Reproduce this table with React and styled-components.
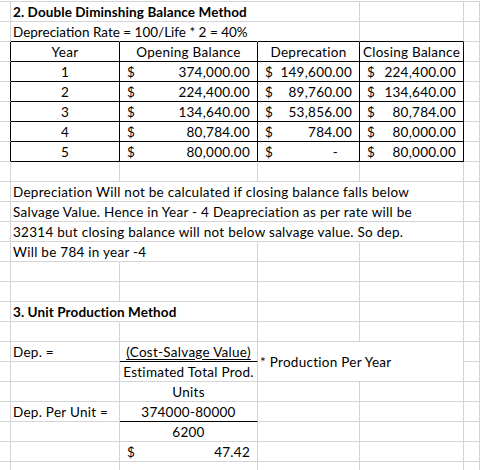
import React from 'react';
import styled, { createGlobalStyle } from 'styled-components';

const GRID = '#d4d4d4';
const INK = '#000';

const GlobalStyle = createGlobalStyle`
  html, body {
    margin: 0;
    padding: 0;
    background: #fff;
    overflow: hidden;
  }
  body {
    font-family: Lato, "Liberation Sans", sans-serif;
    color: #000;
  }
`;

const Sheet = styled.div`
  display: grid;
  grid-template-columns: 11px 109px 138px 102px 104px 1fr;
  grid-auto-rows: 20px;
  width: 480px;
  height: 469px;
  margin-top: 1px;
  border-top: 1px solid ${GRID};
  overflow: hidden;
  font-size: 13.5px;
  letter-spacing: 0.27px;
`;

const justify = {
  left: 'flex-start',
  center: 'center',
  right: 'flex-end',
  split: 'space-between',
};

const Cell = styled.div`
  box-sizing: border-box;
  min-width: 0;
  display: flex;
  align-items: center;
  justify-content: ${p => justify[p.$align || 'left']};
  padding: ${p => (p.$align === 'split' ? '0 7px' : '0 2px')};
  white-space: nowrap;
  font-weight: ${p => (p.$bold ? 700 : 400)};
  letter-spacing: ${p => (p.$bold ? '0.1px' : p.$tight ? '0' : 'inherit')};
  border-right: 1px solid ${p => (p.$noRight ? 'transparent' : p.$rb ? INK : GRID)};
  border-bottom: 1px solid ${p => (p.$bb ? INK : GRID)};
  grid-column: span ${p => p.$cols || 1};
  grid-row: span ${p => p.$rows || 1};
`;

const Underlined = styled.span`
  text-decoration: underline;
  text-underline-offset: 2px;
`;

const Dash = styled.span`
  padding-right: 14px;
`;

const Money = ({ value, ...rest }) => (
  <Cell $align="split" {...rest}>
    <span>$</span>
    {value == null ? <Dash>-</Dash> : <span>{value}</span>}
  </Cell>
);

const BlankRow = () => (
  <>
    {Array.from({ length: 6 }, (_, i) => (
      <Cell key={i} />
    ))}
  </>
);

const schedule = [
  [1, '374,000.00', '149,600.00', '224,400.00'],
  [2, '224,400.00', '89,760.00', '134,640.00'],
  [3, '134,640.00', '53,856.00', '80,784.00'],
  [4, '80,784.00', '784.00', '80,000.00'],
  [5, '80,000.00', null, '80,000.00'],
];

const note = [
  'Depreciation Will not be calculated if closing balance falls below',
  'Salvage Value. Hence in Year - 4 Deapreciation as per rate will be',
  '32314 but closing balance will not below salvage value. So dep.',
  'Will be 784 in year -4',
];

const headers = ['Year', 'Opening Balance', 'Deprecation', 'Closing Balance'];

export default function App() {
  return (
    <>
      <GlobalStyle />
      <Sheet>
        {/* row 1 */}
        <Cell />
        <Cell $bold $noRight>2. Double Diminshing Balance Method</Cell>
        <Cell $noRight />
        <Cell />
        <Cell />
        <Cell />

        {/* row 2 */}
        <Cell />
        <Cell $noRight $tight $bb>Depreciation Rate = 100/Life * 2 = 40%</Cell>
        <Cell $noRight $bb />
        <Cell $bb />
        <Cell $bb />
        <Cell />

        {/* table header */}
        <Cell $rb />
        {headers.map(h => (
          <Cell key={h} $align="center" $rb $bb>
            {h}
          </Cell>
        ))}
        <Cell />

        {schedule.map(([year, open, dep, close]) => (
          <React.Fragment key={year}>
            <Cell $rb />
            <Cell $align="center" $rb $bb>
              {year}
            </Cell>
            <Money value={open} $rb $bb />
            <Money value={dep} $rb $bb />
            <Money value={close} $rb $bb />
            <Cell />
          </React.Fragment>
        ))}

        <BlankRow />

        {note.map((line, i) => (
          <React.Fragment key={i}>
            <Cell />
            <Cell $noRight>{line}</Cell>
            <Cell $noRight={i < 3} />
            <Cell $noRight={i < 3} />
            <Cell />
            <Cell />
          </React.Fragment>
        ))}

        <BlankRow />
        <BlankRow />

        <Cell />
        <Cell $bold $noRight>3. Unit Production Method</Cell>
        <Cell />
        <Cell />
        <Cell />
        <Cell />

        <BlankRow />

        <Cell />
        <Cell>Dep. =</Cell>
        <Cell $align="center" $bb>
          <Underlined>(Cost-Salvage Value)</Underlined>
        </Cell>
        <Cell $cols={2} $rows={2}>* Production Per Year</Cell>
        <Cell />

        <Cell />
        <Cell />
        <Cell $align="center">Estimated Total Prod.</Cell>
        <Cell />

        <Cell />
        <Cell />
        <Cell $align="center">Units</Cell>
        <Cell />
        <Cell />
        <Cell />

        <Cell />
        <Cell>Dep. Per Unit =</Cell>
        <Cell $align="center" $bb>374000-80000</Cell>
        <Cell />
        <Cell />
        <Cell />

        <Cell />
        <Cell />
        <Cell $align="center">6200</Cell>
        <Cell />
        <Cell />
        <Cell />

        <Cell />
        <Cell />
        <Money value="47.42" />
        <Cell />
        <Cell />
        <Cell />

        <BlankRow />
      </Sheet>
    </>
  );
}
